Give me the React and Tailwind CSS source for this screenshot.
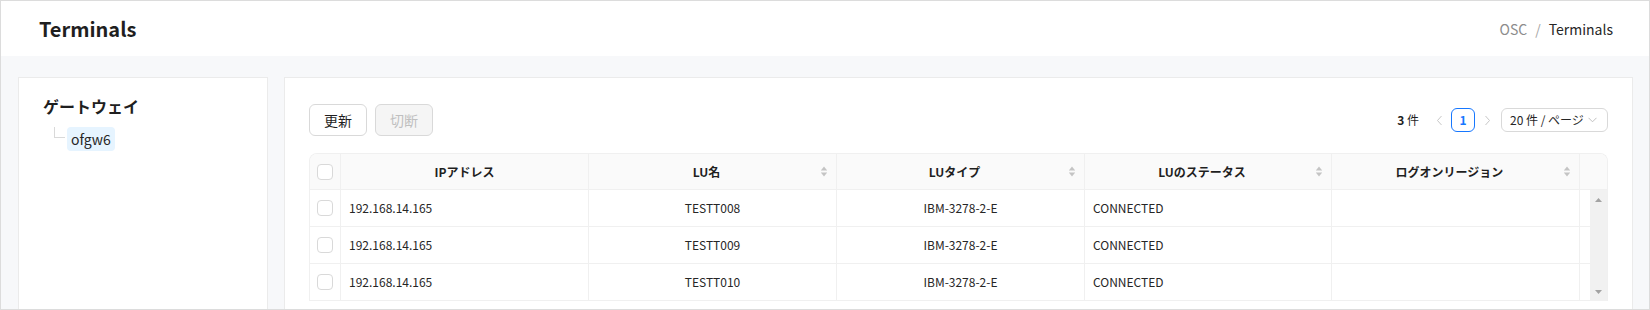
import React from "react";

const Sorter = () => (
  <svg width="8" height="13" viewBox="0 0 8 13" className="ml-1 shrink-0">
    <path d="M4 1.5 L7.2 5.5 H0.8 Z" fill="#c4c4c4" />
    <path d="M4 11.5 L7.2 7.5 H0.8 Z" fill="#c4c4c4" />
  </svg>
);

const Checkbox = () => (
  <span className="block w-4 h-4 rounded-[4px] border border-[#d9d9d9] bg-white" />
);

const cols = [
  { key: "ip", title: "IPアドレス", w: "w-[248px]", sort: false, align: "left" },
  { key: "lu", title: "LU名", w: "w-[248px]", sort: true, align: "center" },
  { key: "type", title: "LUタイプ", w: "w-[248px]", sort: true, align: "center" },
  { key: "status", title: "LUのステータス", w: "w-[247px]", sort: true, align: "left" },
  { key: "region", title: "ログオンリージョン", w: "w-[248px]", sort: true, align: "left" },
];

const rows = [
  { ip: "192.168.14.165", lu: "TESTT008", type: "IBM-3278-2-E", status: "CONNECTED", region: "" },
  { ip: "192.168.14.165", lu: "TESTT009", type: "IBM-3278-2-E", status: "CONNECTED", region: "" },
  { ip: "192.168.14.165", lu: "TESTT010", type: "IBM-3278-2-E", status: "CONNECTED", region: "" },
];

export default function App() {
  return (
    <div className="w-[1650px] h-[310px] overflow-hidden border border-[#dcdcdc] bg-[#f7f8fa] font-['Noto_Sans_CJK_JP',sans-serif] text-[#1f1f1f]">
      <header className="h-[55px] bg-white flex items-center justify-between pl-[38px] pr-[36px]">
        <h1 className="text-[20px] leading-7 font-bold text-[#1f1f1f]">Terminals</h1>
        <nav className="flex items-center text-[14px] leading-[22px]">
          <span className="text-[#8c8c8c]">OSC</span>
          <span className="mx-2 text-[#a6a6a6]">/</span>
          <span className="text-[#262626]">Terminals</span>
        </nav>
      </header>

      <div className="flex gap-4 pl-[17px] pr-4 pt-[21px]">
        <aside className="w-[250px] h-[300px] shrink-0 bg-white border border-[#ebebeb] px-6 pt-4">
          <div className="text-[16px] leading-6 font-bold text-[#1f1f1f]">ゲートウェイ</div>
          <div className="flex items-start mt-[9px]">
            <span className="ml-[11px] w-[11px] h-[11px] border-l border-b border-[#d9d9d9]" />
            <span className="ml-[2px] h-6 px-1 rounded-[4px] bg-[#e6f4ff] text-[14px] leading-6 text-[#262626]">
              ofgw6
            </span>
          </div>
        </aside>

        <main className="flex-1 h-[300px] bg-white border border-[#ebebeb] px-6 pt-[26px]">
          <div className="flex items-center justify-between h-8">
            <div className="flex gap-2">
              <button className="w-[58px] h-8 rounded-md border border-[#d9d9d9] bg-white text-[14px] text-[#1f1f1f]">
                更新
              </button>
              <button className="w-[58px] h-8 rounded-md border border-[#d9d9d9] bg-[#f5f5f5] text-[14px] text-[#bfbfbf]">
                切断
              </button>
            </div>
            <div className="flex items-center text-[12px] text-[#1f1f1f]">
              <span className="mr-2">
                <span className="font-semibold">3</span> 件
              </span>
              <span className="w-6 h-6 flex items-center justify-center">
                <svg width="7" height="11" viewBox="0 0 7 11">
                  <polyline points="5.5,1 1.5,5.5 5.5,10" fill="none" stroke="#c8c8c8" strokeWidth="1" />
                </svg>
              </span>
              <span className="w-6 h-6 flex items-center justify-center rounded-md border border-[#1677ff] text-[#1677ff] font-semibold bg-white">
                1
              </span>
              <span className="w-6 h-6 flex items-center justify-center">
                <svg width="7" height="11" viewBox="0 0 7 11">
                  <polyline points="1.5,1 5.5,5.5 1.5,10" fill="none" stroke="#c8c8c8" strokeWidth="1" />
                </svg>
              </span>
              <div className="ml-[2px] w-[107px] h-6 flex items-center justify-between rounded-md border border-[#d9d9d9] pl-2 pr-[10px] bg-white">
                <span className="text-[#262626]">20 件 / ページ</span>
                <svg width="9" height="6" viewBox="0 0 9 6">
                  <polyline points="0.5,0.8 4.5,4.8 8.5,0.8" fill="none" stroke="#c0c0c0" strokeWidth="1" />
                </svg>
              </div>
            </div>
          </div>

          <div className="mt-[17px] border-t border-l border-r border-[#f0f0f0] rounded-t-lg overflow-hidden text-[12px]">
            <div className="flex h-[36px] bg-[#fafafa] border-b border-[#f0f0f0]">
              <div className="w-[31px] shrink-0 border-r border-[#f0f0f0] flex items-center justify-center">
                <Checkbox />
              </div>
              {cols.map((c) => (
                <div
                  key={c.key}
                  className={`${c.w} shrink-0 border-r border-[#f0f0f0] flex items-center px-2`}
                >
                  <span className="flex-1 text-center font-bold leading-5 text-[#1f1f1f]">{c.title}</span>
                  {c.sort && <Sorter />}
                </div>
              ))}
              <div className="flex-1" />
            </div>

            <div className="flex">
              <div className="flex-1">
                {rows.map((r, i) => (
                  <div key={i} className="flex h-[37px] border-b border-[#f0f0f0] text-[#262626]">
                    <div className="w-[31px] shrink-0 border-r border-[#f0f0f0] flex items-center justify-center">
                      <Checkbox />
                    </div>
                    {cols.map((c) => (
                      <div
                        key={c.key}
                        className={`${c.w} shrink-0 border-r border-[#f0f0f0] flex items-center px-2 leading-5 ${
                          c.align === "center" ? "justify-center" : "justify-start"
                        }`}
                      >
                        {r[c.key]}
                      </div>
                    ))}
                    <div className="flex-1" />
                  </div>
                ))}
              </div>
              <div className="w-[17px] shrink-0 bg-[#f1f1f1] flex flex-col items-center justify-between pt-[8px] pb-[7px]">
                <svg width="7" height="4" viewBox="0 0 7 4">
                  <path d="M3.5 0 L7 4 H0 Z" fill="#a3a3a3" />
                </svg>
                <svg width="7" height="4" viewBox="0 0 7 4">
                  <path d="M3.5 4 L7 0 H0 Z" fill="#a3a3a3" />
                </svg>
              </div>
            </div>
          </div>
        </main>
      </div>
    </div>
  );
}
